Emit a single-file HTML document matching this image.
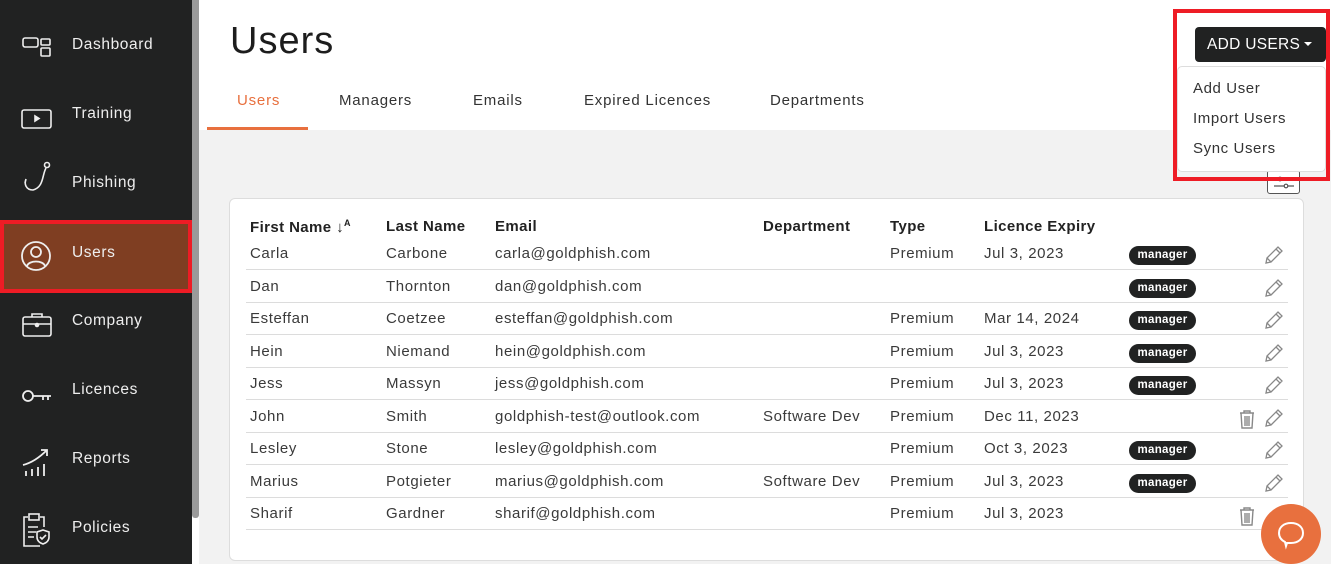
<!DOCTYPE html>
<html><head><meta charset="utf-8"><style>
*{box-sizing:border-box;margin:0;padding:0}
html,body{width:1331px;height:564px;overflow:hidden}
body{font-family:"Liberation Sans",sans-serif;background:#f2f2f2;position:relative;color:#333;letter-spacing:.6px}
.sb{position:absolute;left:0;top:0;width:192px;height:564px;background:#212222}
.scr{position:absolute;left:192px;top:0;width:7px;height:564px;background:#fff}
.scr div{position:absolute;left:0;top:0;width:7px;height:518px;background:#9a9a9a;border-radius:0 0 3px 3px}
.nav{position:absolute;left:0;width:192px;height:69px;color:#eee;font-size:15.5px}
.nav span{position:absolute;left:72px;top:0;line-height:20px}
.nav svg{position:absolute;left:20px}
.act{background:#7f3e22;border:4px solid #ee1c25}
.hdr{position:absolute;left:199px;top:0;width:1132px;height:130px;background:#fff}
h1{position:absolute;left:230px;top:20px;font-weight:normal;font-size:38px;color:#1d1d1d;letter-spacing:1px}
.tab{position:absolute;top:92px;font-size:15px;color:#333;letter-spacing:.8px}
.ul{position:absolute;left:207px;top:127px;width:101px;height:3px;background:#e8703e}
.btn{position:absolute;left:1195px;top:27px;width:131px;height:35px;background:#212222;border-radius:4px;color:#fff;font-size:15.5px;line-height:35px;padding-left:12px;letter-spacing:.3px}
.btn:after{content:"";position:absolute;right:14px;top:15px;border:4px solid transparent;border-top:4px solid #fff}
.dd{position:absolute;left:1177px;top:66px;width:149px;height:106px;background:#fff;border:1px solid #ddd;border-radius:5px;font-size:15px;color:#333}
.dd div{position:absolute;left:15px}
.red{position:absolute;left:1173px;top:9px;width:157px;height:172px;border:4px solid #ee1c25}
.flt{position:absolute;left:1267px;top:170px;width:33px;height:24px;border:1px solid #555;border-radius:3px;background:#fff}
.card{position:absolute;left:229px;top:198px;width:1075px;height:363px;background:#fff;border:1px solid #ddd;border-radius:6px}
.r{position:absolute;left:246px;width:1042px;height:33px;font-size:15px;color:#3a3a3a}
.r.l{border-bottom:1px solid #dcdcdc}
.r span{position:absolute;top:0}
.th{font-weight:bold;color:#222;letter-spacing:.4px}
.bd{position:absolute;left:883px;top:4px;width:67px;height:19px;border-radius:10px;background:#212222;color:#fff;font-size:11.5px;font-weight:bold;text-align:center;line-height:19px;letter-spacing:.3px}
.chat{position:absolute;left:1261px;top:504px;width:60px;height:60px;border-radius:50%;background:#e8703e}
</style></head><body>
<div class="sb">
<div class="nav" style="top:35px"><svg width="34" height="26" viewBox="0 0 34 26" style="top:0" fill="none" stroke="#eee" stroke-width="1.6"><rect x="3" y="3" width="15" height="9" rx="2"/><rect x="21" y="4" width="9" height="6" rx="1"/><rect x="21" y="13" width="9" height="8" rx="1"/></svg><span>Dashboard</span></div>
<div class="nav" style="top:104px"><svg width="34" height="26" viewBox="0 0 34 26" style="top:2px" fill="none" stroke="#eee" stroke-width="1.6"><rect x="2" y="4" width="29" height="18" rx="2"/><path d="M15 10v5l4-2.5z" fill="#eee"/></svg><span>Training</span></div>
<div class="nav" style="top:173px"><svg width="34" height="34" viewBox="0 0 34 34" style="top:-14px" fill="none" stroke="#eee" stroke-width="1.6"><circle cx="27" cy="6" r="2.5"/><path d="M26 9 C22 16 24 28 13 31 C6 31 4 25 6 20 M6 20 l-1 4"/></svg><span>Phishing</span></div>
<div class="nav act" style="top:220px;height:73px"><svg width="32" height="32" viewBox="0 0 32 32" style="top:16px;left:16px" fill="none" stroke="#eee" stroke-width="1.8"><circle cx="16" cy="16" r="14"/><circle cx="16" cy="12" r="5"/><path d="M7 26c2-6 16-6 18 0"/></svg><span style="left:68px;top:19px">Users</span></div>
<div class="nav" style="top:311px"><svg width="34" height="28" viewBox="0 0 34 28" style="top:0" fill="none" stroke="#eee" stroke-width="1.6"><rect x="3" y="6" width="28" height="19" rx="2"/><path d="M12 6V3h10v3M3 13h28"/><circle cx="17" cy="14" r="1.5" fill="#eee"/></svg><span>Company</span></div>
<div class="nav" style="top:380px"><svg width="34" height="20" viewBox="0 0 34 20" style="top:6px" fill="none" stroke="#eee" stroke-width="1.8"><circle cx="8" cy="10" r="5"/><path d="M13 10h18M23 10v4M28 10v4"/></svg><span>Licences</span></div>
<div class="nav" style="top:449px"><svg width="34" height="34" viewBox="0 0 34 34" style="top:-4px" fill="none" stroke="#eee" stroke-width="1.8"><path d="M3 20c8-2 16-7 24-15M21 5h6v6M6 31v-5M12 31v-7M18 31v-9M24 31v-12"/></svg><span>Reports</span></div>
<div class="nav" style="top:518px"><svg width="34" height="36" viewBox="0 0 34 36" style="top:-6px" fill="none" stroke="#eee" stroke-width="1.6"><path d="M8 5H4v29h16M20 5h4v10"/><rect x="9" y="2" width="10" height="6"/><path d="M8 15h10M8 20h8M8 25h6"/><path d="M23 18l6 2v5c0 4-3 6-6 7-3-1-6-3-6-7v-5z"/><path d="M20 25l2 2 4-4"/></svg><span>Policies</span></div>
</div>
<div class="scr"><div></div></div>
<div class="hdr"></div>
<h1>Users</h1>
<div class="tab" style="left:237px;color:#e8703e">Users</div>
<div class="tab" style="left:339px">Managers</div>
<div class="tab" style="left:473px">Emails</div>
<div class="tab" style="left:584px">Expired Licences</div>
<div class="tab" style="left:770px">Departments</div>
<div class="ul"></div>
<div class="btn">ADD USERS</div>
<div class="flt"><svg width="31" height="22" viewBox="0 0 31 22" fill="none" stroke="#555" stroke-width="1.2"><path d="M6 8h20M6 15h20"/><circle cx="12" cy="8" r="1.8" fill="#fff"/><circle cx="18" cy="15" r="1.8" fill="#fff"/></svg></div>
<div class="dd"><div style="top:13px">Add User</div><div style="top:43px">Import Users</div><div style="top:73px">Sync Users</div></div>
<div class="red"></div>
<div class="card"></div>
<div class="r th" style="top:218px"><span style="left:4px">First Name ↓<sup style="font-size:9px">A</sup></span><span style="left:140px">Last Name</span><span style="left:249px">Email</span><span style="left:517px">Department</span><span style="left:644px">Type</span><span style="left:738px">Licence Expiry</span></div>
<div id="rows"></div>
<script>
var d=[["Carla","Carbone","carla@goldphish.com","","Premium","Jul 3, 2023",1,0],
["Dan","Thornton","dan@goldphish.com","","","",1,0],
["Esteffan","Coetzee","esteffan@goldphish.com","","Premium","Mar 14, 2024",1,0],
["Hein","Niemand","hein@goldphish.com","","Premium","Jul 3, 2023",1,0],
["Jess","Massyn","jess@goldphish.com","","Premium","Jul 3, 2023",1,0],
["John","Smith","goldphish-test@outlook.com","Software Dev","Premium","Dec 11, 2023",0,1],
["Lesley","Stone","lesley@goldphish.com","","Premium","Oct 3, 2023",1,0],
["Marius","Potgieter","marius@goldphish.com","Software Dev","Premium","Jul 3, 2023",1,0],
["Sharif","Gardner","sharif@goldphish.com","","Premium","Jul 3, 2023",0,1]];
var pen='<svg style="position:absolute;left:1017px;top:7px" width="22" height="22" viewBox="0 0 22 22" fill="none" stroke="#888" stroke-width="1.3"><path d="M3 19l1-5L15 3l4 4L8 18zM13 5l4 4M4 14l4 4"/></svg>';
var tr='<svg style="position:absolute;left:992px;top:9px" width="18" height="20" viewBox="0 0 18 20" fill="none" stroke="#888" stroke-width="1.4"><path d="M2 4h14M6 4V2h6v2M3 4l1 15h10l1-15M7 7v10M9 7v10M11 7v10"/></svg>';
var h='';d.forEach(function(x,i){var t=244+i*32.5;
h+='<div class="r l" style="top:'+(t-7)+'px;line-height:33px"><span style="left:4px">'+x[0]+'</span><span style="left:140px">'+x[1]+'</span><span style="left:249px">'+x[2]+'</span><span style="left:517px">'+x[3]+'</span><span style="left:644px">'+x[4]+'</span><span style="left:738px">'+x[5]+'</span>'+(x[6]?'<div class="bd" style="top:9px">manager</div>':'')+(x[7]?tr:'')+(i<8?pen:'')+'</div>';});
document.getElementById('rows').innerHTML=h;
</script>
<div class="chat"><svg width="60" height="60" viewBox="0 0 60 60" fill="none" stroke="#fff" stroke-width="2"><path d="M30 19c7 0 12 4 12 10s-5 10-12 10c-2 0-3 0-4 0l-1 3-1-4c-4-2-6-5-6-9 0-6 5-10 12-10z"/></svg></div>
</body></html>
